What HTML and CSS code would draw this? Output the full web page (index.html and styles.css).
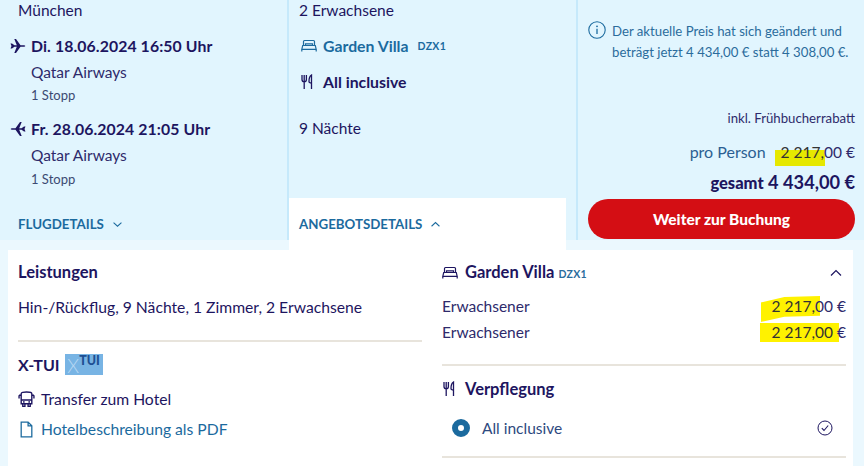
FILE: index.html
```html
<!DOCTYPE html>
<html lang="de">
<head>
    <meta charset="UTF-8">
    <meta name="viewport" content="width=device-width, initial-scale=1.0">
    <title>Angebot</title>
    <link rel="stylesheet" href="styles.css">
</head>
<body>
    <div class="summary">
        <div class="col col-flight">
            <div class="line">München</div>
            <div class="flight">
                <div class="line bold flight-date">
                    <svg class="icon" viewBox="0 0 16 16"><path d="M0.500 5.500L2 5.500l2.500 1.800 2.300 0L4.300 1h1.700l4.500 6.200 3 0c1 0 1.800 0.300 1.800 0.800s-0.800 0.800-1.800 0.800l-3 0L6 15H4.300l2.500-6.300-2.300 0L2 10.500H0.500L1.500 8z" fill="currentColor"/></svg>
                    Di. 18.06.2024 16:50 Uhr
                </div>
                <div class="line indent airline">Qatar Airways</div>
                <div class="line indent small stops">1 Stopp</div>
            </div>
            <div class="flight second">
                <div class="line bold flight-date">
                    <svg class="icon flip" viewBox="0 0 16 16"><path d="M0.500 5.500L2 5.500l2.500 1.800 2.300 0L4.300 1h1.700l4.500 6.200 3 0c1 0 1.800 0.300 1.800 0.800s-0.800 0.800-1.800 0.800l-3 0L6 15H4.300l2.500-6.300-2.300 0L2 10.500H0.500L1.500 8z" fill="currentColor"/></svg>
                    Fr. 28.06.2024 21:05 Uhr
                </div>
                <div class="line indent airline">Qatar Airways</div>
                <div class="line indent small stops last">1 Stopp</div>
            </div>
            <div class="details-link flug">FLUGDETAILS
                <svg class="chev" viewBox="0 0 12 8"><path d="M1.500 1.800L6 6l4.500-4.200" fill="none" stroke="currentColor" stroke-width="1.200"/></svg>
            </div>
        </div>

        <div class="col col-offer">
            <div class="line">2 Erwachsene</div>
            <div class="line bold room">
                <svg class="icon bed" viewBox="0 0 16 14"><path d="M2.500 6.500V2.500c0-0.600 0.400-1 1-1h9c0.600 0 1 0.400 1 1v4M4.500 6.500V4.800h7v1.700M1.700 6.500h12.600l0.900 3.800H0.800zM0.800 10.300v2.300M15.200 10.300v2.300" fill="none" stroke="currentColor" stroke-width="1.200"/></svg>
                <span>Garden Villa</span> <span class="code">DZX1</span>
            </div>
            <div class="line bold board">
                <svg class="icon fork" viewBox="0 0 14 16"><path d="M1 1v4.500c0 1.500 1 2.300 2.200 2.300s2.200-0.800 2.200-2.300V1M3.200 1v14M10.500 15V1C8.800 2 8 4.500 8 7.500c0 1 0.500 1.500 2.500 1.500" fill="none" stroke="currentColor" stroke-width="1.300"/></svg>
                All inclusive
            </div>
            <div class="line nights">9 Nächte</div>
            <div class="details-link tab">ANGEBOTSDETAILS
                <svg class="chev" viewBox="0 0 12 8"><path d="M1.500 6L6 1.800 10.500 6" fill="none" stroke="currentColor" stroke-width="1.200"/></svg>
            </div>
        </div>

        <div class="col col-price">
            <div class="notice">
                <svg class="info" viewBox="0 0 18 18"><circle cx="9" cy="9" r="8.200" fill="none" stroke="currentColor" stroke-width="1.100"/><path d="M9 7.800v5.200" stroke="currentColor" stroke-width="1.300"/><circle cx="9" cy="5.300" r="0.900" fill="currentColor"/></svg>
                <p>Der aktuelle Preis hat sich geändert und beträgt jetzt 4 434,00 € statt 4 308,00 €.</p>
            </div>
            <div class="discount">inkl. Frühbucherrabatt</div>
            <div class="per-person"><span class="pp-label">pro Person</span><span class="amount"><span class="marker marker-top">2 217,</span>00 €</span></div>
            <div class="total"><span class="total-label">gesamt</span> 4 434,00 €</div>
            <button class="cta">Weiter zur Buchung</button>
        </div>
    </div>

    <div class="panel">
        <div class="panel-col">
            <h3 class="title">Leistungen</h3>
            <div class="line services">Hin-/Rückflug, 9 Nächte, 1 Zimmer, 2 Erwachsene</div>
            <hr class="rule first-rule">
            <div class="xtui">
                <span>X-TUI</span>
                <span class="badge"><span class="badge-x">X</span><span class="badge-tui">TUI</span></span>
            </div>
            <div class="line item transfer">
                <svg class="item-icon" viewBox="0 0 16 16"><path d="M3 2.500C3 1.500 5 1 8 1s5 0.500 5 1.500V12H3zM3 8.500h10M1 4v3M15 4v3M1 4h2M13 4h2M4.500 12v2.500h2V12M9.500 12v2.500h2V12" fill="none" stroke="currentColor" stroke-width="1.300"/><circle cx="5.500" cy="10.300" r="0.800" fill="currentColor"/><circle cx="10.500" cy="10.300" r="0.800" fill="currentColor"/></svg>
                Transfer zum Hotel
            </div>
            <div class="line item pdf">
                <svg class="item-icon" viewBox="0 0 16 16"><path d="M3 1h6.500L13 4.500V15H3zM9.500 1v3.500H13" fill="none" stroke="currentColor" stroke-width="1.200"/></svg>
                Hotelbeschreibung als PDF
            </div>
        </div>

        <div class="panel-col">
            <div class="room-head">
                <svg class="icon bed-dark" viewBox="0 0 16 14"><path d="M2.500 6.500V2.500c0-0.600 0.400-1 1-1h9c0.600 0 1 0.400 1 1v4M4.500 6.500V4.800h7v1.700M1.700 6.500h12.600l0.900 3.800H0.800zM0.800 10.300v2.300M15.200 10.300v2.300" fill="none" stroke="currentColor" stroke-width="1.200"/></svg>
                <h3 class="title">Garden Villa <span class="code">DZX1</span></h3>
                <svg class="collapse" viewBox="0 0 12 8"><path d="M1 6.500L6 1.500l5 5" fill="none" stroke="currentColor" stroke-width="1.200"/></svg>
            </div>
            <div class="price-row row-one"><span>Erwachsener</span><span class="amount"><span class="marker marker-slant">2 217,</span>00 €</span></div>
            <div class="price-row row-two"><span>Erwachsener</span><span class="amount"><span class="marker marker-full">2 217,00 </span>€</span></div>
            <hr class="rule second-rule">
            <div class="board-head">
                <svg class="fork-dark" viewBox="0 0 14 16"><path d="M1 1v4.500c0 1.500 1 2.300 2.200 2.300s2.200-0.800 2.200-2.300V1M3.200 1v14M10.500 15V1C8.800 2 8 4.500 8 7.500c0 1 0.500 1.500 2.500 1.500" fill="none" stroke="currentColor" stroke-width="1.300"/></svg>
                <h3 class="title">Verpflegung</h3>
            </div>
            <div class="option">
                <span class="radio"></span>
                <span class="option-label">All inclusive</span>
                <svg class="check" viewBox="0 0 16 16"><circle cx="8" cy="8" r="7" fill="none" stroke="currentColor" stroke-width="1"/><path d="M4.800 8.200l2.200 2.300 4.200-5" fill="none" stroke="currentColor" stroke-width="1.100"/></svg>
            </div>
            <hr class="rule third-rule">
        </div>
    </div>
</body>
</html>
```

FILE: styles.css
```css
html, body {
    height: 466px;
    overflow: hidden;
}

body {
    margin: 0;
    font-family: Lato, "Noto Sans", sans-serif;
    font-size: 15.5px;
    color: #1d1560;
    background-color: #ebf8fe;
}

.summary {
    display: grid;
    grid-template-columns: 289px 289px 286px;
    height: 240px;
    background-color: #e1f5fe;
}

.col {
    display: flex;
    flex-direction: column;
    min-width: 0;
}

.col-flight {
    padding-left: 18px;
    border-right: 2px solid #c6e9fb;
}

.col-offer {
    padding-left: 10px;
    border-right: 2px solid #c6e9fb;
}

.col-price {
    padding: 0 9px 0 10px;
}

.line {
    line-height: 20px;
}

.bold {
    font-weight: 700;
    font-size: 15.8px;
}

.icon {
    flex: none;
}

.flight-date {
    display: flex;
    align-items: center;
    gap: 5px;
    margin-left: -8px;
    letter-spacing: 0.1px;
}

.flight {
    margin-top: 16px;
}

.flight.second {
    margin-top: 14px;
}

.flight-date .icon {
    width: 16px;
    height: 16px;
}

.flight-date .flip {
    transform: scaleX(-1);
}

.indent {
    padding-left: 13px;
}

.airline {
    margin-top: 6px;
    color: #2e2a6b;
}

.small {
    font-size: 13px;
    color: #3c4a72;
}

.stops {
    margin-top: 3px;
}

.stops.last {
    margin-top: 4px;
}

.details-link {
    font-size: 13.3px;
    font-weight: 700;
    color: #1b6a9e;
    line-height: 20px;
    display: flex;
    align-items: center;
    gap: 8px;
}

.flug {
    margin-top: 25px;
}

.chev {
    width: 11px;
    height: 7px;
}

.room {
    display: flex;
    align-items: center;
    gap: 6px;
    margin-top: 16px;
    color: #1b6a9e;
}

.room .icon {
    width: 16px;
    height: 14px;
    margin-left: 2px;
}

.room .code {
    margin-left: 3px;
}

.code {
    font-size: 10.5px;
    font-weight: 700;
    letter-spacing: 0.3px;
    color: #1b6a9e;
}

.board {
    display: flex;
    align-items: center;
    gap: 8px;
    margin-top: 16px;
}

.board .icon {
    width: 14px;
    height: 16px;
    margin-left: 2px;
}

.nights {
    margin-top: 26px;
}

.tab {
    background-color: #fff;
    margin: auto 10px -10px -10px;
    padding: 16px 0 16px 10px;
    height: 20px;
}

.notice {
    display: flex;
    gap: 6px;
    margin-top: 21px;
    color: #1b6a9e;
}

.notice p {
    margin: 0;
    font-size: 13.2px;
    line-height: 21px;
    color: #2b6c9c;
}

.info {
    width: 18px;
    height: 18px;
    flex: none;
}

.discount {
    text-align: right;
    font-size: 13.2px;
    line-height: 20px;
    margin-top: 45px;
    color: #2e2a6b;
}

.per-person {
    display: flex;
    justify-content: flex-end;
    gap: 15px;
    line-height: 20px;
    margin-top: 14px;
    color: #2e2a6b;
}

.pp-label {
    font-size: 16px;
    color: #2b5f92;
}

.amount {
    position: relative;
    isolation: isolate;
}

.marker {
    position: relative;
    color: #333;
}

.marker::before {
    content: "";
    position: absolute;
    z-index: -1;
}

.marker-top::before {
    left: -6px;
    right: -1px;
    top: 7px;
    bottom: -5px;
    background-color: #e6e800;
}

.total {
    text-align: right;
    font-size: 18.2px;
    font-weight: 700;
    line-height: 24px;
    margin-top: 8px;
}

.total-label {
    font-size: 16.5px;
    font-weight: 900;
}

.cta {
    display: block;
    width: 267px;
    height: 40px;
    margin-top: 4px;
    border: none;
    border-radius: 20px;
    background-color: #d40e14;
    color: #fff;
    font-family: inherit;
    font-size: 15.5px;
    font-weight: 900;
}

.panel {
    display: grid;
    grid-template-columns: 404px 404px;
    column-gap: 20px;
    margin: 10px 11px 0 8px;
    padding: 12px 7px 0 10px;
    height: 204px;
    background-color: #fff;
}

.title {
    margin: 0;
    font-size: 16.5px;
    font-weight: 700;
    line-height: 20px;
}

.services {
    margin-top: 15px;
    font-size: 15.7px;
}

.rule {
    border: none;
    height: 2px;
    margin: 0;
    background-color: #e8e4dc;
}

.first-rule {
    margin-top: 23px;
}

.xtui {
    display: flex;
    align-items: center;
    gap: 5px;
    margin-top: 11px;
    height: 22px;
    font-size: 16px;
    font-weight: 700;
}

.badge {
    display: flex;
    align-items: flex-start;
    justify-content: center;
    width: 38px;
    height: 21px;
    background-color: #78b4e4;
}

.badge-x {
    font-size: 19px;
    font-weight: 300;
    line-height: 23px;
    color: #b7d7f3;
}

.badge-tui {
    font-size: 12.5px;
    line-height: 14px;
    font-weight: 900;
    color: #1d4f93;
}

.item {
    display: flex;
    align-items: center;
    gap: 6px;
    font-size: 15.7px;
}

.item-icon {
    width: 17px;
    height: 17px;
    flex: none;
}

.transfer {
    margin-top: 14px;
}

.pdf {
    margin-top: 10px;
    color: #1b6a9e;
}

.room-head {
    display: flex;
    align-items: center;
    gap: 7px;
}

.room-head .code {
    color: #2b6c9c;
}

.bed-dark {
    width: 16px;
    height: 14px;
}

.collapse {
    width: 12px;
    height: 8px;
    margin-left: auto;
    margin-right: 4px;
}

.price-row {
    display: flex;
    justify-content: space-between;
    line-height: 20px;
    color: #2e2a6b;
}

.row-one {
    margin-top: 12px;
}

.row-two {
    margin-top: 6px;
}

.marker-slant::before {
    left: -11px;
    right: -5px;
    top: -1px;
    bottom: -7px;
    background-color: #fff200;
    clip-path: polygon(0 25%, 40% 4%, 100% 0, 100% 76%, 40% 80%, 0 100%);
}

.marker-full::before {
    left: -12px;
    right: -2px;
    top: 0;
    bottom: -1px;
    background-color: #fff200;
}

.second-rule {
    margin-top: 22px;
}

.board-head {
    display: flex;
    align-items: center;
    gap: 8px;
    margin-top: 13px;
}

.fork-dark {
    width: 14px;
    height: 16px;
    margin-left: 1px;
}

.option {
    display: flex;
    align-items: center;
    margin-top: 19px;
    height: 20px;
    padding-left: 10px;
}

.radio {
    box-sizing: border-box;
    width: 18px;
    height: 18px;
    border: 6px solid #1b6a9e;
    border-radius: 50%;
    background-color: #fff;
}

.option-label {
    margin-left: 12px;
    color: #2e4a80;
}

.check {
    width: 16px;
    height: 16px;
    margin-left: auto;
    margin-right: 13px;
}

.third-rule {
    margin-top: 18px;
}
```
